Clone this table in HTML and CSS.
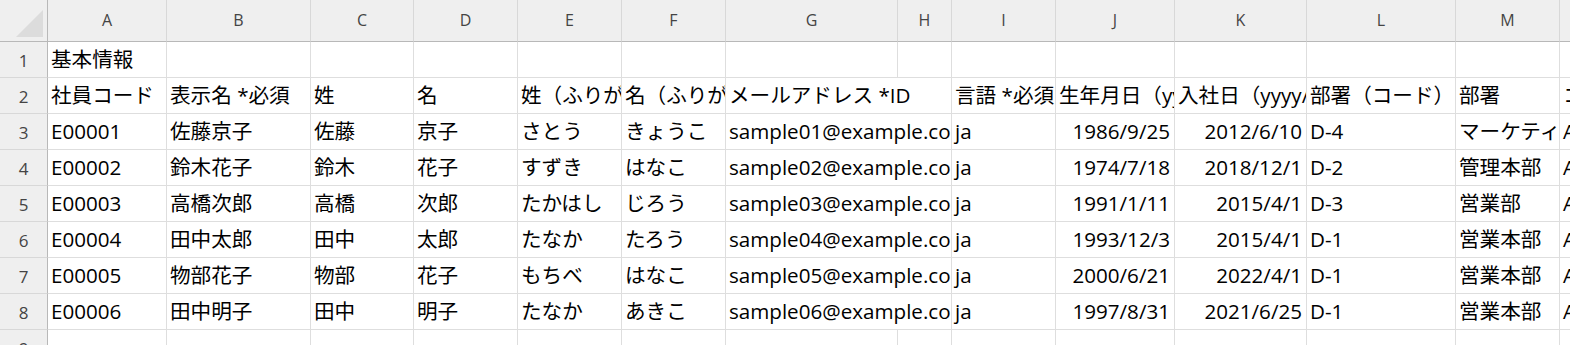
FILE: index.html
```html
<!DOCTYPE html>
<html lang="ja">
<head>
<meta charset="utf-8">
<link rel="stylesheet" href="styles.css">
</head>
<body>
<div class="sheet">
  <div class="corner"><div class="tri"></div></div>
  <div class="ch">A</div><div class="ch">B</div><div class="ch">C</div><div class="ch">D</div><div class="ch">E</div><div class="ch">F</div><div class="ch">G</div><div class="ch">H</div><div class="ch">I</div><div class="ch">J</div><div class="ch">K</div><div class="ch">L</div><div class="ch">M</div><div class="ch">N</div>

  <div class="rh">1</div>
  <div class="c">基本情報</div><div class="c"></div><div class="c"></div><div class="c"></div><div class="c"></div><div class="c"></div><div class="c"></div><div class="c"></div><div class="c"></div><div class="c"></div><div class="c"></div><div class="c"></div><div class="c"></div><div class="c"></div>

  <div class="rh">2</div>
  <div class="c">社員コード</div><div class="c">表示名 *必須</div><div class="c">姓</div><div class="c">名</div><div class="c">姓（ふりがな）</div><div class="c">名（ふりがな）</div><div class="c span2">メールアドレス *ID</div><div class="c">言語 *必須</div><div class="c">生年月日（yyyy/mm/dd）</div><div class="c">入社日（yyyy/mm/dd）</div><div class="c">部署（コード）</div><div class="c">部署</div><div class="c">コスト</div>

  <div class="rh">3</div>
  <div class="c">E00001</div><div class="c">佐藤京子</div><div class="c">佐藤</div><div class="c">京子</div><div class="c">さとう</div><div class="c">きょうこ</div><div class="c span2">sample01@example.com</div><div class="c">ja</div><div class="c num">1986/9/25</div><div class="c num">2012/6/10</div><div class="c">D-4</div><div class="c">マーケティング部</div><div class="c">A</div>

  <div class="rh">4</div>
  <div class="c">E00002</div><div class="c">鈴木花子</div><div class="c">鈴木</div><div class="c">花子</div><div class="c">すずき</div><div class="c">はなこ</div><div class="c span2">sample02@example.com</div><div class="c">ja</div><div class="c num">1974/7/18</div><div class="c num">2018/12/1</div><div class="c">D-2</div><div class="c">管理本部</div><div class="c">A</div>

  <div class="rh">5</div>
  <div class="c">E00003</div><div class="c">高橋次郎</div><div class="c">高橋</div><div class="c">次郎</div><div class="c">たかはし</div><div class="c">じろう</div><div class="c span2">sample03@example.com</div><div class="c">ja</div><div class="c num">1991/1/11</div><div class="c num">2015/4/1</div><div class="c">D-3</div><div class="c">営業部</div><div class="c">A</div>

  <div class="rh">6</div>
  <div class="c">E00004</div><div class="c">田中太郎</div><div class="c">田中</div><div class="c">太郎</div><div class="c">たなか</div><div class="c">たろう</div><div class="c span2">sample04@example.com</div><div class="c">ja</div><div class="c num">1993/12/3</div><div class="c num">2015/4/1</div><div class="c">D-1</div><div class="c">営業本部</div><div class="c">A</div>

  <div class="rh">7</div>
  <div class="c">E00005</div><div class="c">物部花子</div><div class="c">物部</div><div class="c">花子</div><div class="c">もちべ</div><div class="c">はなこ</div><div class="c span2">sample05@example.com</div><div class="c">ja</div><div class="c num">2000/6/21</div><div class="c num">2022/4/1</div><div class="c">D-1</div><div class="c">営業本部</div><div class="c">A</div>

  <div class="rh">8</div>
  <div class="c">E00006</div><div class="c">田中明子</div><div class="c">田中</div><div class="c">明子</div><div class="c">たなか</div><div class="c">あきこ</div><div class="c span2">sample06@example.com</div><div class="c">ja</div><div class="c num">1997/8/31</div><div class="c num">2021/6/25</div><div class="c">D-1</div><div class="c">営業本部</div><div class="c">A</div>

  <div class="rh">9</div>
  <div class="c"></div><div class="c"></div><div class="c"></div><div class="c"></div><div class="c"></div><div class="c"></div><div class="c"></div><div class="c"></div><div class="c"></div><div class="c"></div><div class="c"></div><div class="c"></div><div class="c"></div><div class="c"></div>
</div>
</body>
</html>
```

FILE: styles.css
```css
html, body {
  margin: 0;
  padding: 0;
  background: #ffffff;
  overflow: hidden;
}

.sheet {
  display: grid;
  grid-template-columns: 48px 119px 144px 103px 104px 104px 104px 172px 54px 104px 119px 132px 149px 104px 120px;
  grid-template-rows: 42px repeat(9, 36px);
  width: 1690px;
  font-family: "Open Sans", "Noto Sans CJK JP", sans-serif;
  color: #000;
}

.corner {
  background: #efefef;
  border-right: 1px solid #b8b8b8;
  border-bottom: 1px solid #b8b8b8;
  box-sizing: border-box;
  display: flex;
  justify-content: flex-end;
  align-items: flex-end;
  padding: 0 4px 4px 0;
}

.tri {
  width: 27px;
  height: 27px;
  background: #dcdcdc;
  clip-path: polygon(100% 0, 100% 100%, 0 100%);
}

.ch {
  background: #efefef;
  border-right: 1px solid #d8d8d8;
  border-bottom: 1px solid #b8b8b8;
  box-sizing: border-box;
  text-align: center;
  font-size: 16px;
  line-height: 41px;
  color: #444;
}

.rh {
  background: #efefef;
  border-right: 1px solid #b8b8b8;
  border-bottom: 1px solid #d8d8d8;
  box-sizing: border-box;
  text-align: center;
  font-size: 17px;
  line-height: 37px;
  color: #444;
}

.c {
  border-right: 1px solid #dedede;
  border-bottom: 1px solid #dedede;
  box-sizing: border-box;
  font-size: 20.6px;
  line-height: 35px;
  padding: 0 4px 0 3px;
  white-space: nowrap;
  overflow: hidden;
}

.span2 {
  grid-column: span 2;
}

.num {
  text-align: right;
}
```
